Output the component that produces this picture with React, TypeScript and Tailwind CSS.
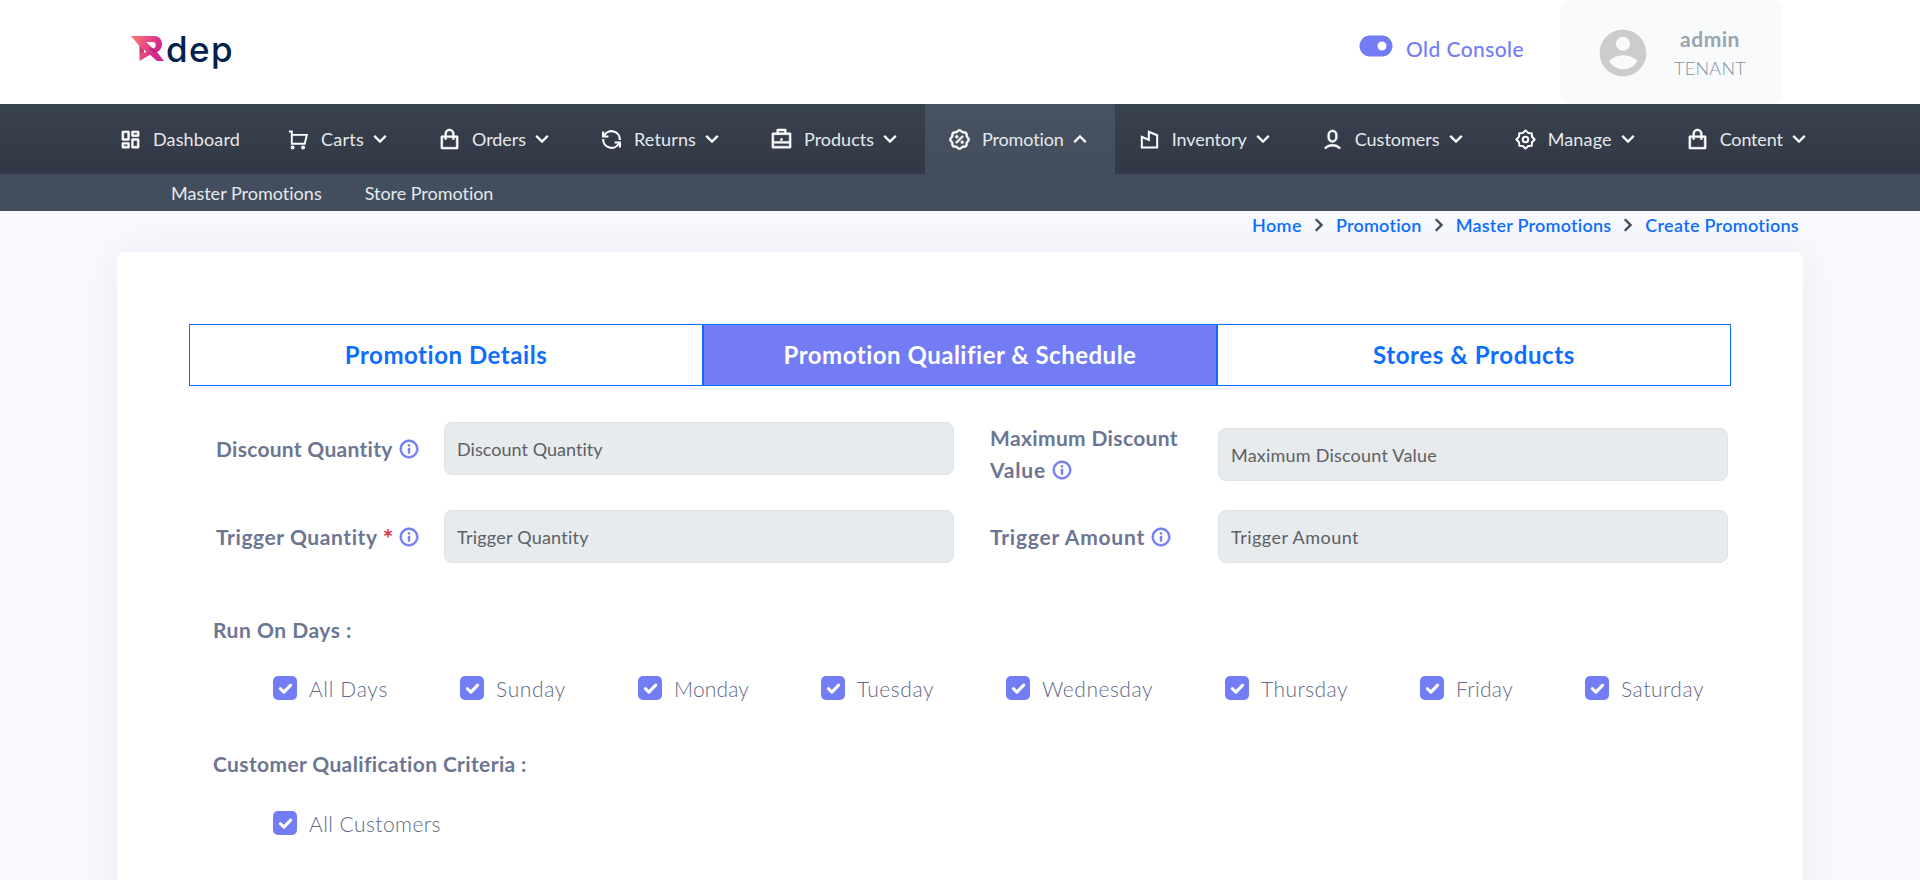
import { useLayoutEffect, useRef, useState } from "react";
import type { ComponentType, ReactNode } from "react";
import {
  RiAccountCircleFill,
  RiArrowDownSLine,
  RiArrowRightSLine,
  RiArrowUpSLine,
  RiBriefcaseLine,
  RiDashboardLine,
  RiDiscountPercentLine,
  RiInformationLine,
  RiShoppingBagLine,
  RiToggleFill,
  RiUser6Line,
} from "react-icons/ri";

/** Text whose tracking is adjusted so that it spans the given width. */
function Fit({ text, w, className = "" }: { text: string; w: number; className?: string }) {
  const ref = useRef<HTMLSpanElement>(null);
  const [tracking, setTracking] = useState(0);
  useLayoutEffect(() => {
    const el = ref.current;
    if (el) setTracking((w - el.getBoundingClientRect().width) / text.length);
  }, [text, w]);
  return (
    <span ref={ref} className={`inline-block whitespace-nowrap ${className}`} style={{ letterSpacing: tracking }}>
      {text}
    </span>
  );
}

type IconProps = { className?: string };

function CartIcon({ className }: IconProps) {
  return (
    <svg className={className} viewBox="0 0 24 24" fill="none" stroke="currentColor" strokeWidth="2">
      <path d="M2 3.600H5V16.400H18.500L20.700 7.200H5" />
      <circle cx="5.800" cy="20.400" r="1.500" fill="currentColor" strokeWidth="1.200" />
      <circle cx="16.800" cy="20.400" r="1.500" fill="currentColor" strokeWidth="1.200" />
    </svg>
  );
}

function RefreshIcon({ className }: IconProps) {
  return (
    <svg className={className} viewBox="0 0 24 24" fill="none" stroke="currentColor" strokeWidth="2.200">
      <path d="M4.200 8.200A8.700 8.700 0 0 1 20.700 12.500M19.800 15.800A8.700 8.700 0 0 1 3.300 11.500" />
      <path d="M3.200 3.600V8.800H8.800M20.800 20.400V15.200H15.200" />
    </svg>
  );
}

function WarehouseIcon({ className }: IconProps) {
  return (
    <svg className={className} viewBox="0 0 24 24" fill="none" stroke="currentColor" strokeWidth="2.100">
      <path d="M4 9.200V20.400H20V7.600L11.300 3.900V12.400Z" />
    </svg>
  );
}

function GearIcon({ className }: IconProps) {
  return (
    <svg className={className} viewBox="0 0 24 24" fill="none" stroke="currentColor" strokeWidth="2.100" strokeLinejoin="round">
      <path d="M12 2.500L14.900 5.200L18.500 5.500L18.800 9.100L21.500 12L18.800 14.900L18.500 18.500L14.900 18.800L12 21.500L9.100 18.800L5.500 18.500L5.200 14.900L2.500 12L5.200 9.100L5.500 5.500L9.100 5.200Z" />
      <circle cx="12" cy="12" r="2.900" />
    </svg>
  );
}

type NavEntry = { label: string; w: number; icon: ComponentType<IconProps>; plain?: boolean; active?: boolean; drawn?: boolean };

const nav: NavEntry[] = [
  { label: "Dashboard", w: 87, icon: RiDashboardLine, plain: true },
  { label: "Carts", w: 43, icon: CartIcon, drawn: true },
  { label: "Orders", w: 54, icon: RiShoppingBagLine },
  { label: "Returns", w: 62, icon: RefreshIcon, drawn: true },
  { label: "Products", w: 70, icon: RiBriefcaseLine },
  { label: "Promotion", w: 82, icon: RiDiscountPercentLine, active: true },
  { label: "Inventory", w: 75, icon: WarehouseIcon, drawn: true },
  { label: "Customers", w: 85, icon: RiUser6Line },
  { label: "Manage", w: 64, icon: GearIcon, drawn: true },
  { label: "Content", w: 63, icon: RiShoppingBagLine },
];

const crumbs = [
  { label: "Home", w: 50 },
  { label: "Promotion", w: 86 },
  { label: "Master Promotions", w: 156 },
  { label: "Create Promotions", w: 154 },
];

const tabs = [
  { label: "Promotion Details", w: 203 },
  { label: "Promotion Qualifier & Schedule", w: 353, active: true },
  { label: "Stores & Products", w: 202 },
];

const days = [
  { label: "All Days", w: 79 },
  { label: "Sunday", w: 70 },
  { label: "Monday", w: 75 },
  { label: "Tuesday", w: 77 },
  { label: "Wednesday", w: 111 },
  { label: "Thursday", w: 87 },
  { label: "Friday", w: 57 },
  { label: "Saturday", w: 83 },
];

function Logo() {
  return (
    <div className="ml-[131px] mt-[27px] flex h-11">
      <svg className="mt-[9px] h-[25px] w-[33px]" viewBox="0 0 33 25">
        <defs>
          <linearGradient id="mark" x1="0" y1="0" x2="1" y2="0.35">
            <stop offset="0" stopColor="#ff7a6b" />
            <stop offset="0.9" stopColor="#d4278f" />
          </linearGradient>
        </defs>
        <path
          d="M0 0H23C28 0 31 3.500 31 8.200C31 12 29 14.800 26 16L33 25H26L19 18.800L8.500 25V10Z M15 6L22 12.500C26 12 25.500 6 22 6Z"
          fill="url(#mark)"
          fillRule="evenodd"
        />
        <path d="M8.500 9.500L14 15.500L8.500 18Z" fill="#a8305f" opacity="0.45" />
        <path d="M13 13.500L15.500 16L13 17Z" fill="#fff" />
        <path d="M17 12L22 12.500L26 16L23 17Z" fill="#8e1f6d" opacity="0.5" />
      </svg>
      <Fit text="dep" w={68} className="ml-[2px] font-[Inter] text-[35px] leading-[44px] font-medium text-[#03214b]" />
    </div>
  );
}

function Header() {
  return (
    <header className="flex h-[104px] bg-white">
      <Logo />
      <div className="ml-auto mr-[138px] flex">
        <div className="flex text-[#727cf5]">
          <RiToggleFill className="mt-[28px] size-9" />
          <Fit text="Old Console" w={118} className="ml-[12px] mt-[34px] text-[21px] leading-[30px] font-medium" />
        </div>
        <div className="ml-[36px] flex w-[222px] rounded-lg bg-[#f9fafc] text-[#98a6ad]">
          <RiAccountCircleFill className="ml-[35px] mt-[25px] size-14 text-[#ccc]" />
          <div className="ml-[21px] mt-6 flex w-[76px] flex-col items-center">
            <Fit text="admin" w={60} className="text-[21px] leading-[30px] font-bold" />
            <Fit text="TENANT" w={72} className="text-[18px] leading-7 font-light text-[#82929a]" />
          </div>
        </div>
      </div>
    </header>
  );
}

function NavItem({ item }: { item: NavEntry }) {
  const Icon = item.icon;
  const Arrow = item.active ? RiArrowUpSLine : RiArrowDownSLine;
  return (
    <a className={`flex h-full items-center pl-[23px] ${item.active ? "bg-linear-to-b from-[#485362] to-[#424e5d]" : ""}`}>
      <Icon className={`size-[23px] shrink-0 text-white ${item.drawn ? "" : "stroke-current stroke-[0.5]"}`} />
      <Fit text={item.label} w={item.w} className="ml-[11px] text-[18px] leading-6" />
      {item.plain ? (
        <span className="w-6" />
      ) : (
        <Arrow className="mr-[23px] ml-1 size-6 shrink-0 stroke-current stroke-[0.4] text-white" />
      )}
    </a>
  );
}

function Field({ text, w, className = "" }: { text: string; w: number; className?: string }) {
  return (
    <div className={`flex h-[53px] w-[510px] items-center rounded-lg border border-[#dee2e6] bg-[#e8ebee] pl-3 text-[#5c6064] ${className}`}>
      <Fit text={text} w={w} className="text-[18px] leading-6" />
    </div>
  );
}

function Info() {
  return <RiInformationLine className="size-[22px] shrink-0 stroke-current stroke-[0.6] text-[#727cf5]" />;
}

function Check({ label, w }: { label: string; w: number }) {
  return (
    <label className="flex h-6 items-center">
      <span className="flex size-6 items-center justify-center rounded-[5px] bg-[#727cf5]">
        <svg className="size-[15px]" viewBox="0 0 14 14" fill="none" stroke="#fff" strokeWidth="2.900" strokeLinecap="round" strokeLinejoin="round">
          <path d="M2.200 7.200L5.500 10.400L11.800 3.800" />
        </svg>
      </span>
      <Fit text={label} w={w} className="ml-3 pt-0.5 text-[21px] leading-6 font-light text-[#5f6987]" />
    </label>
  );
}

function Title({ children, className = "" }: { children: ReactNode; className?: string }) {
  return <h3 className={`text-[21px] leading-8 font-bold ${className}`}>{children}</h3>;
}

export default function App() {
  return (
    <div className="h-[880px] w-[1920px] overflow-hidden bg-[#f9faff] font-[Lato,sans-serif] text-[#6c7693]">
      <Header />
      <nav className="flex h-[70px] bg-linear-to-b from-[#39434f] via-[#353c4a] to-[#323846] pl-[96px] text-[#e6e9ec]">
        {nav.map((item) => (
          <NavItem key={item.label} item={item} />
        ))}
      </nav>
      <div className="flex h-[37px] items-center bg-[#424e5d] pl-[171px] text-[18px] leading-6 text-[#e6e9ec]">
        <Fit text="Master Promotions" w={151} />
        <Fit text="Store Promotion" w={129} className="ml-[43px]" />
      </div>

      <div className="relative z-10 flex h-[41px] justify-end pr-[121px] text-[18px] leading-7 font-semibold text-[#0d6efd]">
        {crumbs.map((c, i) => (
          <div key={c.label} className="flex h-7 items-center">
            {i > 0 && <RiArrowRightSLine className="mx-[5px] size-6 stroke-current stroke-[0.5] text-[#424e5d]" />}
            <Fit text={c.label} w={c.w} />
          </div>
        ))}
      </div>

      <main className="ml-[117px] h-[700px] w-[1686px] rounded-lg bg-white px-[72px] pt-[72px] shadow-[0_0_50px_rgba(40,40,80,0.07)]">
        <div className="flex h-[62px]">
          {tabs.map((t) => (
            <button
              key={t.label}
              className={`flex w-[514px] items-center justify-center border border-[#0d6efd] text-2xl font-bold ${
                t.active ? "bg-[#727cf5] text-white" : "bg-white text-[#0d6efd]"
              }`}
            >
              <Fit text={t.label} w={t.w} />
            </button>
          ))}
        </div>

        <div className="mt-9 flex text-[21px] leading-8 font-bold">
          <div className="flex w-[255px] items-start pt-[11px] pl-[27px]">
            <Fit text="Discount Quantity" w={177} />
            <span className="mt-[5px] ml-[5px]"><Info /></span>
          </div>
          <Field text="Discount Quantity" w={146} className="font-normal" />
          <div className="w-[264px] pl-[36px]">
            <Fit text="Maximum Discount" w={188} className="block" />
            <div className="flex items-center">
              <Fit text="Value" w={56} />
              <span className="ml-[5px]"><Info /></span>
            </div>
          </div>
          <Field text="Maximum Discount Value" w={206} className="mt-1.5 font-normal" />
        </div>

        <div className="mt-6 flex h-[53px] items-center text-[21px] leading-8 font-bold">
          <div className="flex w-[255px] items-center pl-[27px]">
            <Fit text="Trigger Quantity" w={162} />
            <span className="ml-[5px] w-[10px] pt-0.5 text-[25px] text-[#dc3545]">*</span>
            <span className="ml-[5px]"><Info /></span>
          </div>
          <Field text="Trigger Quantity" w={132} className="font-normal" />
          <div className="flex w-[264px] items-center pl-[36px]">
            <Fit text="Trigger Amount" w={155} />
            <span className="ml-[5px]"><Info /></span>
          </div>
          <Field text="Trigger Amount" w={128} className="font-normal" />
        </div>

        <Title className="mt-[51px] ml-6">
          <Fit text="Run On Days :" w={139} />
        </Title>
        <div className="mt-[30px] ml-[84px] flex gap-[72px]">
          {days.map((d) => (
            <Check key={d.label} label={d.label} w={d.w} />
          ))}
        </div>
        <Title className="mt-[48px] ml-6">
          <Fit text="Customer Qualification Criteria :" w={314} />
        </Title>
        <div className="mt-[31px] ml-[84px] flex">
          <Check label="All Customers" w={132} />
        </div>
      </main>
    </div>
  );
}
